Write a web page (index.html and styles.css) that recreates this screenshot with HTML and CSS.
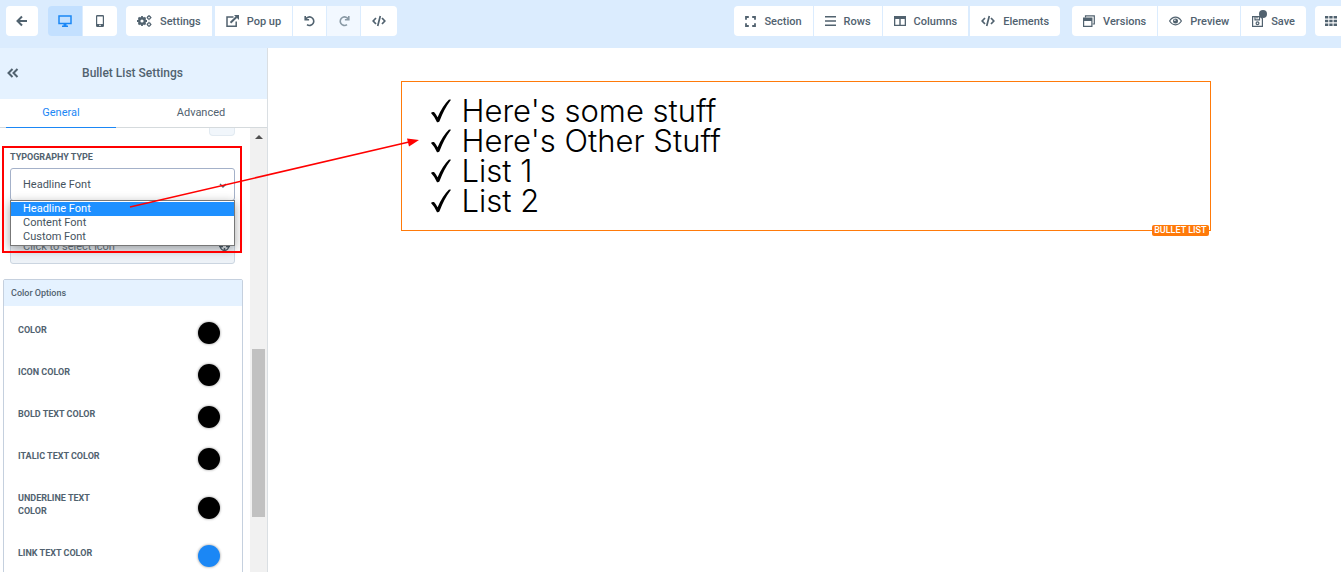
FILE: index.html
```html
<!DOCTYPE html>
<html lang="en">
<head>
  <meta charset="UTF-8">
  <meta name="viewport" content="width=device-width, initial-scale=1.0">
  <title>Bullet List Settings</title>
  <link rel="stylesheet" href="styles.css">
</head>
<body>
<header class="toolbar">
  <div class="group">
    <button class="tool square" type="button" aria-label="Back">
      <svg width="12" height="12" viewBox="0 0 12 12"><path class="line" stroke-width="2" d="M11 6H2M6 1.5L1.5 6L6 10.5"/></svg>
    </button>
  </div>
  <div class="group devices">
    <button class="tool square active" type="button" aria-label="Desktop">
      <svg width="14" height="12" viewBox="0 0 14 12"><path class="line" stroke-width="1.5" d="M1 1h12v7.5H1z"/><path d="M5.5 9h3v1.5H10V12H4v-1.5h1.5z"/></svg>
    </button>
    <button class="tool square" type="button" aria-label="Mobile">
      <svg width="8" height="12" viewBox="0 0 8 12"><path fill-rule="evenodd" d="M1.2 0h5.6Q8 0 8 1.2v9.6Q8 12 6.800 12H1.200Q0 12 0 10.800V1.200Q0 0 1.200 0zM1.200 1.500v7.500h5.600V1.500zM3.300 9.800v1.200h1.400V9.800z"/></svg>
    </button>
  </div>
  <div class="group wide">
    <button class="tool" type="button">
      <svg width="15" height="12" viewBox="0 0 15 12"><circle class="line" stroke-width="2.400" cx="5" cy="6" r="2.800"/><path class="line" stroke-width="1.800" d="M5 1v1.500M5 9.500V11M0 6h1.500M8.500 6H10M1.500 2.500l1 1M7.500 8.500l1 1M8.500 2.500l-1 1M2.500 8.500l-1 1"/><circle class="line" stroke-width="1.300" cx="12" cy="2.600" r="1.500"/><circle class="line" stroke-width="1.300" cx="12" cy="9.400" r="1.500"/><path class="line" d="M12 0v1M12 4.400v.8M9.700 2.600h.8M13.600 2.600h.9M12 6.800v.8M12 11v1M9.700 9.400h.8M13.600 9.400h.9"/></svg>
      Settings
    </button>
    <button class="tool spaced" type="button">
      <svg width="13" height="12" viewBox="0 0 13 12"><path class="line" stroke-width="1.500" d="M7.500 2H1v9.200h9.200V6.500"/><path class="line" stroke-width="2" d="M4.500 7.800L10.500 2"/><path d="M8 0h5v5z"/></svg>
      Pop up
    </button>
    <button class="tool square" type="button" aria-label="Undo">
      <svg width="12" height="12" viewBox="0 0 12 12"><path class="line" stroke-width="1.600" d="M1.200 1v3.700h3.900M1.500 4.500A4.300 4.300 0 1 1 3 9.700"/></svg>
    </button>
    <button class="tool square" type="button" aria-label="Redo" disabled>
      <svg width="12" height="12" viewBox="0 0 12 12"><path class="line" stroke-width="1.600" d="M10.800 1v3.700H6.900M10.500 4.500A4.300 4.300 0 1 0 9 9.700"/></svg>
    </button>
    <button class="tool square code" type="button" aria-label="Code">
      <svg width="14" height="12" viewBox="0 0 14 12"><path class="line" stroke-width="1.700" d="M4 3L1.200 6L4 9M10 3L12.800 6L10 9M8.300 1L5.700 11"/></svg>
    </button>
  </div>
  <div class="group insert">
    <button class="tool" type="button">
      <svg width="11" height="11" viewBox="0 0 11 11"><path class="line" stroke-width="1.800" d="M1 3.800V1h2.800M7.200 1H10v2.800M10 7.200V10H7.200M3.800 10H1V7.200"/></svg>
      Section
    </button>
    <button class="tool" type="button">
      <svg width="11" height="10" viewBox="0 0 11 10"><path d="M0 0h11v1.600H0zM0 4.200h11v1.600H0zM0 8.400h11V10H0z"/></svg>
      Rows
    </button>
    <button class="tool" type="button">
      <svg width="12" height="10" viewBox="0 0 12 10"><path fill-rule="evenodd" d="M0 0h12v10H0zM1.300 3v5.700h4V3zM6.700 3v5.700h4V3z"/></svg>
      Columns
    </button>
    <button class="tool spaced-thin" type="button">
      <svg width="14" height="12" viewBox="0 0 14 12"><path class="line" stroke-width="1.700" d="M4 3L1.200 6L4 9M10 3L12.800 6L10 9M8.300 1L5.700 11"/></svg>
      Elements
    </button>
  </div>
  <div class="group">
    <button class="tool" type="button">
      <svg width="12" height="12" viewBox="0 0 12 12"><path class="line" stroke-width="1.200" d="M2.500 2.500V.8h8.800V9H9.500"/><path fill-rule="evenodd" d="M0 2.500h9.500V12H0zM1.200 6v4.800h7.100V6z"/></svg>
      Versions
    </button>
    <button class="tool" type="button">
      <svg width="13" height="10" viewBox="0 0 13 10"><path class="line" stroke-width="1.200" d="M.6 5Q3 1.200 6.500 1.200T12.400 5Q10 8.800 6.500 8.800T.6 5z"/><circle cx="6.500" cy="5" r="2.500"/><circle class="glint" cx="5.900" cy="4.200" r=".8"/></svg>
      Preview
    </button>
    <button class="tool save" type="button">
      <svg width="11" height="11" viewBox="0 0 11 11"><path class="line" stroke-width="1.200" d="M.6.600h7.800l2 2v7.800H.6zM3 .6v3.200h4.500V.6M5 .6v2"/><circle class="line" stroke-width="1.200" cx="5.500" cy="7.200" r="1.400"/></svg>
      Save
      <span class="unsaved"></span>
    </button>
  </div>
  <div class="group apps">
    <button class="tool" type="button" aria-label="Apps">
      <svg width="12" height="10" viewBox="0 0 12 10"><path d="M0 0h3.300v2.600H0zM4.300 0h3.300v2.600H4.300zM8.600 0H12v2.600H8.600zM0 3.700h3.300v2.600H0zM4.300 3.700h3.300v2.600H4.300zM8.600 3.700H12v2.600H8.600zM0 7.400h3.300V10H0zM4.300 7.400h3.300V10H4.300zM8.600 7.400H12V10H8.600z"/></svg>
    </button>
  </div>
</header>

<div class="workspace">
  <aside class="sidebar">
    <div class="sidebar-head">
      <button class="collapse" type="button" aria-label="Collapse">
        <svg width="12" height="10" viewBox="0 0 12 10"><path class="line" stroke-width="2" d="M5.500 1L1.500 5L5.500 9M10.500 1L6.500 5L10.500 9"/></svg>
      </button>
      <h2>Bullet List Settings</h2>
    </div>
    <nav class="tabs">
      <a class="tab selected" href="#general">General</a>
      <a class="tab" href="#advanced">Advanced</a>
    </nav>
    <div class="panel">
      <div class="fields">
        <div class="stepper"><button type="button" aria-label="Increase"></button></div>
        <label class="field-label" for="typography">Typography type</label>
        <div class="control">
          <select id="typography">
            <option>Headline Font</option>
            <option>Content Font</option>
            <option>Custom Font</option>
          </select>
          <svg class="chevron" width="8" height="6" viewBox="0 0 8 6"><path class="line" stroke-width="1.400" d="M1 1l3 3l3-3"/></svg>
          <ul class="options">
            <li class="current">Headline Font</li>
            <li>Content Font</li>
            <li>Custom Font</li>
          </ul>
        </div>
        <div class="control icon-picker">
          <input type="text" aria-label="Icon" placeholder="Click to select icon" readonly>
          <svg class="target" width="11" height="11" viewBox="0 0 11 11"><circle class="line" stroke-width="1.500" cx="5.500" cy="5.500" r="4"/><path class="line" stroke-width="1.500" d="M5.500 0v4M5.500 7v4M0 5.500h4M7 5.500h4"/></svg>
        </div>
        <section class="card">
          <h3>Color Options</h3>
          <div class="color-row"><span id="c1">Color</span><button class="swatch" type="button" aria-labelledby="c1"></button></div>
          <div class="color-row"><span id="c2">Icon color</span><button class="swatch" type="button" aria-labelledby="c2"></button></div>
          <div class="color-row"><span id="c3">Bold text color</span><button class="swatch" type="button" aria-labelledby="c3"></button></div>
          <div class="color-row"><span id="c4">Italic text color</span><button class="swatch" type="button" aria-labelledby="c4"></button></div>
          <div class="color-row"><span id="c5">Underline text color</span><button class="swatch" type="button" aria-labelledby="c5"></button></div>
          <div class="color-row"><span id="c6">Link text color</span><button class="swatch blue" type="button" aria-labelledby="c6"></button></div>
        </section>
      </div>
      <div class="scrollbar">
        <span class="arrow-up"></span>
        <span class="thumb"></span>
      </div>
    </div>
  </aside>

  <main class="canvas">
    <div class="element">
      <ul class="bullets">
        <li><svg width="22" height="24" viewBox="0 0 22 24"><path d="M1 14Q2 12.500 4 13Q6 15 7.600 18.200Q12.500 7 18.800 .8Q20 .2 21 .8Q14 10 9.400 22.500Q8.400 23.600 7 23.200Q4.500 17.500 1 14z"/></svg>Here's some stuff</li>
        <li><svg width="22" height="24" viewBox="0 0 22 24"><path d="M1 14Q2 12.500 4 13Q6 15 7.600 18.200Q12.500 7 18.800 .8Q20 .2 21 .8Q14 10 9.400 22.500Q8.400 23.600 7 23.200Q4.500 17.500 1 14z"/></svg>Here's Other Stuff</li>
        <li><svg width="22" height="24" viewBox="0 0 22 24"><path d="M1 14Q2 12.500 4 13Q6 15 7.600 18.200Q12.500 7 18.800 .8Q20 .2 21 .8Q14 10 9.400 22.500Q8.400 23.600 7 23.200Q4.500 17.500 1 14z"/></svg>List 1</li>
        <li><svg width="22" height="24" viewBox="0 0 22 24"><path d="M1 14Q2 12.500 4 13Q6 15 7.600 18.200Q12.500 7 18.800 .8Q20 .2 21 .8Q14 10 9.400 22.500Q8.400 23.600 7 23.200Q4.500 17.500 1 14z"/></svg>List 2</li>
      </ul>
      <span class="badge">BULLET LIST</span>
    </div>
  </main>
</div>

<!-- red callout over the editor -->
<svg class="callout" width="430" height="260" viewBox="0 0 430 260">
  <rect x="3" y="147" width="238" height="105"/>
  <path class="shaft" d="M130 207L409 142"/>
  <path class="tip" d="M419 140L409 146.500L407 138.500z"/>
</svg>
</body>
</html>
```
FILE: styles.css
```css
* {
  box-sizing: border-box;
}
body {
  margin: 0;
  height: 100vh;
  display: flex;
  flex-direction: column;
  overflow: hidden;
  font-family: Roboto, sans-serif;
  font-size: 11px;
  color: #51626f;
  background: #fff;
}
button {
  font: inherit;
  color: inherit;
  border: 0;
  padding: 0;
}
svg {
  fill: currentColor;
  flex: none;
}
.line {
  fill: none;
  stroke: currentColor;
}
ul {
  list-style: none;
  margin: 0;
  padding: 0;
}

/* toolbar */
.toolbar {
  flex: none;
  height: 48px;
  padding: 6px 0 0 6px;
  display: flex;
  gap: 9px;
  background: #dbecfe;
  overflow: hidden;
}
.group {
  flex: none;
  height: 30px;
  display: flex;
  gap: 1px;
}
.devices {
  margin-left: 1px;
}
.insert {
  margin-left: auto;
  margin-right: 3px;
}
.apps {
  margin-right: -6px;
}
.tool {
  position: relative;
  display: flex;
  align-items: center;
  justify-content: center;
  gap: 8px;
  padding: 0 11px;
  font-weight: 500;
  background: #fff;
}
.square {
  width: 33px;
  padding: 0;
}
.devices .square {
  width: 34px;
}
.tool:first-child {
  border-radius: 4px 0 0 4px;
}
.tool:last-child {
  border-radius: 0 4px 4px 0;
}
.tool:only-child {
  width: 32px;
  border-radius: 4px;
}
.group .code {
  width: 36px;
}
.tool:disabled {
  color: #8999a5;
  background: #f2f8ff;
}
.active {
  color: #1b87f5;
  background: #c3e0ff;
}
.spaced {
  margin-left: 2px;
}
.spaced-thin {
  margin-left: 1px;
}
.glint {
  fill: #fff;
}
.unsaved {
  position: absolute;
  left: 18px;
  top: 4px;
  width: 8px;
  height: 8px;
  border-radius: 50%;
  background: #51626f;
}

/* sidebar */
.workspace {
  flex: 1;
  min-height: 0;
  display: flex;
}
.sidebar {
  flex: none;
  width: 268px;
  display: flex;
  flex-direction: column;
  border-right: 1px solid #dadfe3;
}
.sidebar-head {
  flex: none;
  height: 51px;
  padding: 0 7px 2px;
  display: flex;
  align-items: center;
  background: #e5f2ff;
}
.sidebar-head h2 {
  flex: 1;
  margin: 0;
  padding-right: 14px;
  font-size: 12px;
  font-weight: 500;
  text-align: center;
}
.collapse {
  display: flex;
  background: none;
}
.tabs {
  flex: none;
  height: 29px;
  padding: 0 11px 0 6px;
  display: flex;
  justify-content: space-between;
  border-bottom: 1px solid #d5dadd;
}
.tab {
  width: 110px;
  height: 29px;
  line-height: 27px;
  text-align: center;
  text-decoration: none;
  color: inherit;
}
.selected {
  color: #1b87f5;
  border-bottom: 1px solid #1b87f5;
}
.panel {
  flex: 1;
  min-height: 0;
  display: flex;
  overflow: hidden;
}
.fields {
  flex: 1;
}
.stepper {
  height: 22px;
  padding-right: 15px;
  display: flex;
  justify-content: flex-end;
}
.stepper button {
  width: 26px;
  height: 8px;
  border: 1px solid #e2eaf1;
  border-top: 0;
  border-radius: 0 0 4px 4px;
  background: #f1f6fb;
}
.field-label {
  display: block;
  height: 18px;
  padding-left: 10px;
  line-height: 14px;
  font-size: 9px;
  font-weight: 700;
  text-transform: uppercase;
}
.control {
  position: relative;
  margin: 0 15px 0 10px;
}
.control select,
.control input {
  display: block;
  width: 100%;
  height: 33px;
  padding: 0 12px;
  font: inherit;
  color: #45535e;
  border: 1px solid #a4b1c9;
  border-radius: 3px;
  background: #fff;
  appearance: none;
}
.chevron {
  position: absolute;
  right: 8px;
  top: 15px;
}
.options {
  position: absolute;
  z-index: 1;
  top: 32px;
  left: 0;
  right: 0;
  padding: 1px 0;
  line-height: 14px;
  color: #45535e;
  border: 1px solid #777;
  background: #fff;
  box-shadow: 0 3px 10px rgba(0, 0, 0, 0.35);
}
.options li {
  padding-left: 12px;
}
.options .current {
  color: #fff;
  background: #1e90ff;
}
.icon-picker {
  margin-top: 28px;
}
.control.icon-picker input {
  height: 35px;
  border-color: #cbd5e0;
  background: #edf2f7;
}
.icon-picker input::placeholder {
  color: #6b7883;
  opacity: 1;
}
.target {
  position: absolute;
  right: 5px;
  top: 12px;
}
.card {
  margin: 15px 7px 0 3px;
  border: 1px solid #c5d0de;
  border-radius: 2px;
}
.card h3 {
  height: 26px;
  margin: 0 0 6px;
  padding-left: 7px;
  line-height: 26px;
  font-size: 9px;
  font-weight: 500;
  background: #e5f2ff;
}
.color-row {
  display: flex;
  align-items: center;
  justify-content: space-between;
  padding: 0 22px 0 14px;
}
.color-row span {
  width: 100px;
  padding: 12px 0 17px;
  line-height: 13px;
  font-size: 9px;
  font-weight: 700;
  text-transform: uppercase;
}
.swatch {
  width: 22px;
  height: 22px;
  border-radius: 50%;
  background: #000;
  box-shadow: 0 0 2px 1px #ccc;
}
.blue {
  background: #1b87f5;
}
.scrollbar {
  width: 17px;
  padding: 7px 2px 0;
  background: #f1f1f1;
}
.arrow-up {
  display: block;
  margin: 0 auto 210px;
  width: 8px;
  border: 4px solid transparent;
  border-top: 0;
  border-bottom-color: #505050;
}
.thumb {
  display: block;
  width: 13px;
  height: 168px;
  background: #c1c1c1;
}

/* page canvas */
.canvas {
  flex: 1;
  padding: 33px 16px 0 18px;
}
.element {
  position: relative;
  max-width: 810px;
  margin: 0 auto;
  padding: 14px 28px;
  border: 1px solid #ff7a0a;
}
.bullets {
  font-family: Inter, sans-serif;
  font-size: 31px;
  font-weight: 300;
  line-height: 30px;
  color: #000;
}
.bullets li {
  display: flex;
  align-items: center;
  gap: 10px;
}
.badge {
  position: absolute;
  right: 1px;
  bottom: -6px;
  padding: 0 2px;
  line-height: 11px;
  font-size: 9px;
  font-weight: 500;
  color: #fff;
  border-radius: 2px;
  background: #ff7a0a;
}

.callout {
  position: absolute;
  z-index: 2;
  left: 0;
  top: 0;
  pointer-events: none;
}
.callout rect,
.callout .shaft {
  fill: none;
  stroke: #f00;
  stroke-width: 2;
}
.callout .shaft {
  stroke-width: 1.5;
}
.callout .tip {
  fill: #f00;
}
```
